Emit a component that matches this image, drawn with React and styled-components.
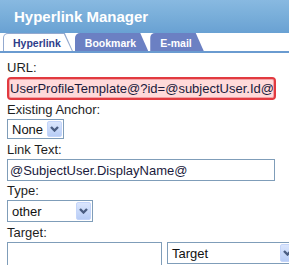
import { createGlobalStyle } from 'styled-components';
import styled from 'styled-components';

const GlobalStyle = createGlobalStyle`
  body {
    margin: 0;
    background: #fff;
    font-family: "Liberation Sans", Arial, sans-serif;
  }
`;

const Chevron = () => (
  <svg width="9" height="6" viewBox="0 0 9 6">
    <polyline points="1,1 4.5,4.5 8,1" fill="none" stroke="#4a5d82" strokeWidth="2.4" />
  </svg>
);

const Dropdown = ({ value, width, height }) => (
  <Select $width={width} $height={height}>
    <SelectText>{value}</SelectText>
    <ArrowBox>
      <Chevron />
    </ArrowBox>
  </Select>
);

const App = () => {
  return (
    <Window>
      <GlobalStyle />
      <Header>
        <Title>Hyperlink Manager</Title>
      </Header>
      <TabStrip>
        <Tab $active>
          <span>Hyperlink</span>
        </Tab>
        <Tab>
          <span>Bookmark</span>
        </Tab>
        <Tab>
          <span>E-mail</span>
        </Tab>
      </TabStrip>
      <Body>
        <Label>URL:</Label>
        <Input $invalid $width={269} $height={23} readOnly value="UserProfileTemplate@?id=@subjectUser.Id@" />
        <Label>Existing Anchor:</Label>
        <Gap>
          <Dropdown value="None" width={57} height={20} />
        </Gap>
        <Label>Link Text:</Label>
        <Input $width={268} $height={22} readOnly value="@SubjectUser.DisplayName@" />
        <Label>Type:</Label>
        <Gap>
          <Dropdown value="other" width={86} height={22} />
        </Gap>
        <Label>Target:</Label>
        <Row>
          <Input $width={155} $height={24} readOnly value="" />
          <Dropdown value="Target" width={130} height={22} />
        </Row>
      </Body>
    </Window>
  );
};

export default App;

const Window = styled.div`
  width: 289px;
  height: 265px;
  overflow: hidden;
  background: #fff;
`;

const Header = styled.div`
  height: 33px;
  background: linear-gradient(#88b9e1 0%, #7aafda 45%, #69a1d3 100%);
`;

const Title = styled.div`
  padding-left: 14px;
  line-height: 33px;
  font-size: 15px;
  font-weight: bold;
  color: #fff;
`;

const TabStrip = styled.div`
  display: flex;
  align-items: flex-end;
  gap: 2px;
  height: 18px;
  padding-left: 3px;
  border-bottom: 2px solid #6a9bd0;
`;

const Tab = styled.div`
  position: relative;
  height: 18px;
  padding: 0 12px 0 10px;
  display: flex;
  align-items: center;
  font-size: 10.5px;
  font-weight: bold;
  color: ${(p) => (p.$active ? '#2e3d8a' : '#fff')};
  background: ${(p) => (p.$active ? '#93a9cf' : '#6b80c3')};
  border-radius: 5px 0 0 0;
  clip-path: polygon(0 0, calc(100% - 8px) 0, 100% 100%, 0 100%);

  &::before {
    content: '';
    display: ${(p) => (p.$active ? 'block' : 'none')};
    position: absolute;
    top: 1px;
    left: 1px;
    right: 1px;
    bottom: 0;
    background: #fff;
    border-radius: 4px 0 0 0;
    clip-path: polygon(0 0, calc(100% - 8px) 0, 100% 100%, 0 100%);
  }

  span {
    position: relative;
    padding-top: 2px;
  }
`;

const Body = styled.div`
  padding: 5px 7px 0 7px;
`;

const Label = styled.div`
  height: 19px;
  line-height: 19px;
  font-size: 13px;
  color: #1e1e1e;
`;

const Input = styled.input`
  display: block;
  box-sizing: border-box;
  width: ${(p) => p.$width}px;
  height: ${(p) => p.$height}px;
  margin: 0;
  padding: 0 ${(p) => (p.$invalid ? '1px' : '2px')};
  font-family: "Liberation Sans", Arial, sans-serif;
  font-size: 13px;
  color: #1a1a3c;
  background: ${(p) => (p.$invalid ? '#ffdada' : '#fff')};
  border: ${(p) => (p.$invalid ? '2px solid #e23a40' : '1px solid #7f9db9')};
  border-radius: ${(p) => (p.$invalid ? '4px' : '0')};
  box-shadow: ${(p) => (p.$invalid ? 'inset 0 0 0 1px #f3a0a4' : 'none')};
  outline: none;
`;

const Gap = styled.div`
  margin-bottom: 1px;
`;

const Row = styled.div`
  display: flex;
  align-items: flex-start;
  gap: 5px;
`;

const Select = styled.div`
  box-sizing: border-box;
  display: flex;
  align-items: stretch;
  width: ${(p) => p.$width}px;
  height: ${(p) => p.$height}px;
  border: 1px solid #7f9db9;
  background: #fff;
  flex-shrink: 0;
`;

const SelectText = styled.div`
  flex: 1;
  display: flex;
  align-items: center;
  padding-left: 4px;
  font-size: 13px;
  color: #111;
`;

const ArrowBox = styled.div`
  width: 15px;
  margin: 1px;
  display: flex;
  align-items: center;
  justify-content: center;
  box-sizing: border-box;
  border: 1px solid #c4d5fa;
  border-radius: 2px;
  background: linear-gradient(#dbe6fd, #b8cdf6);
`;
